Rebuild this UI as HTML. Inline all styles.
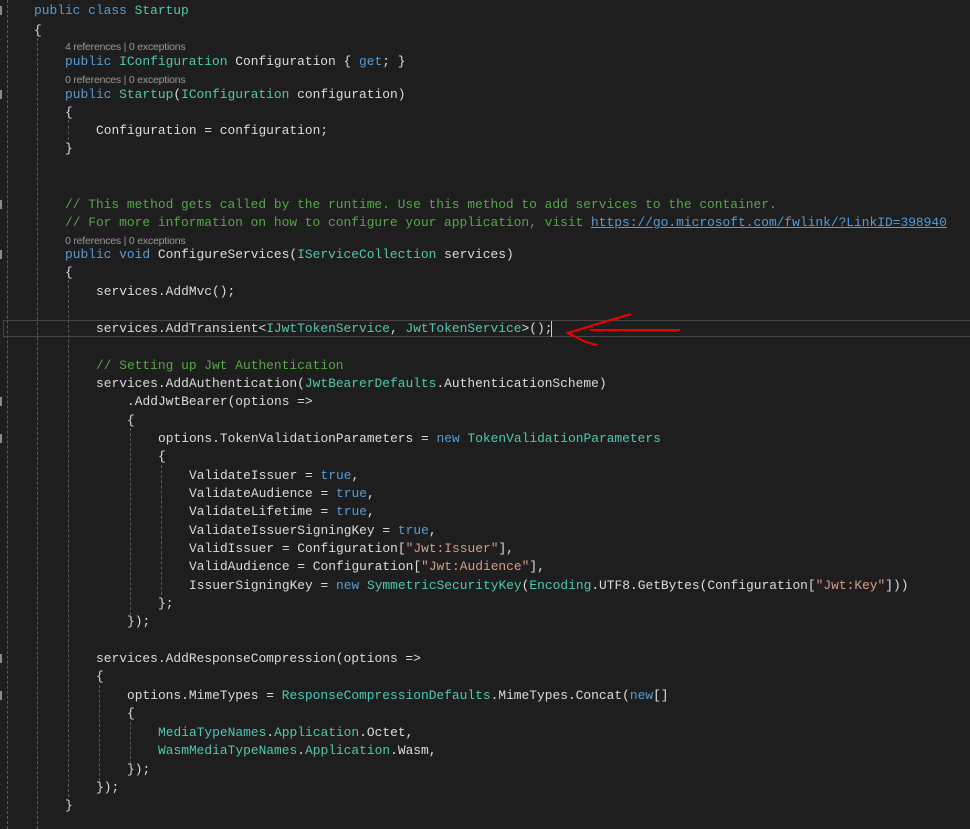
<!DOCTYPE html>
<html><head><meta charset="utf-8"><style>
html,body{margin:0;padding:0;background:#1e1e1e;width:970px;height:829px;overflow:hidden;position:relative}
#w{position:absolute;left:0;top:1px;width:970px;height:829px}
.l{position:absolute;white-space:pre;font-family:"Liberation Mono",monospace;font-size:12.9px;line-height:18px;height:18px;color:#dcdcdc}
.r{position:absolute;white-space:pre;font-family:"Liberation Sans",sans-serif;font-size:10.5px;line-height:12px;color:#999;letter-spacing:-0.2px}
.k{color:#569cd6}.t{color:#4ec9b0}.c{color:#57a64a}.s{color:#d69d85}
.u{color:#569cd6;text-decoration:underline}
.g{position:absolute;width:0;border-left:1px dashed #5a5a5a}
.m{position:absolute;left:0;width:2px;height:9px;background:#8a8a8a}
</style></head><body>
<div class="g" style="left:7px;top:0;height:829px"></div>
<div class="g" style="left:37px;top:38px;height:791px"></div>
<div class="g" style="left:68px;top:120px;height:20px"></div>
<div class="g" style="left:68px;top:280px;height:517px"></div>
<div class="g" style="left:130px;top:428px;height:187px"></div>
<div class="g" style="left:161px;top:465px;height:130px"></div>
<div class="g" style="left:99px;top:685px;height:96px"></div>
<div class="g" style="left:130px;top:722px;height:42px"></div>
<div class="m" style="top:6px"></div><div class="m" style="top:90px"></div><div class="m" style="top:200px"></div><div class="m" style="top:250px"></div><div class="m" style="top:397px"></div><div class="m" style="top:434px"></div><div class="m" style="top:654px"></div><div class="m" style="top:691px"></div>
<div style="position:absolute;left:3px;top:320px;width:970px;height:15px;border:1px solid #464646;border-right:none"></div>
<div style="position:absolute;left:551px;top:321px;width:1px;height:16px;background:#ccc"></div>
<svg style="position:absolute;left:560px;top:310px" width="130" height="40"><path d="M71 4 C50 10 30 16 8 23 C18 28 25 33 37 35" stroke="#e00" stroke-width="2" fill="none"/><path d="M30 20 L120 20" stroke="#e00" stroke-width="2"/></svg>
<div id="w">
<div class="l" style="left:34px;top:1px"><span class="k">public</span> <span class="k">class</span> <span class="t">Startup</span></div>
<div class="l" style="left:34px;top:21px">{</div>
<div class="r" style="left:65px;top:40px">4 references | 0 exceptions</div>
<div class="l" style="left:65px;top:52px"><span class="k">public</span> <span class="t">IConfiguration</span> Configuration { <span class="k">get</span>; }</div>
<div class="r" style="left:65px;top:73px">0 references | 0 exceptions</div>
<div class="l" style="left:65px;top:85px"><span class="k">public</span> <span class="t">Startup</span>(<span class="t">IConfiguration</span> configuration)</div>
<div class="l" style="left:65px;top:103px">{</div>
<div class="l" style="left:96px;top:121px">Configuration = configuration;</div>
<div class="l" style="left:65px;top:139px">}</div>
<div class="l c" style="left:65px;top:195px">// This method gets called by the runtime. Use this method to add services to the container.</div>
<div class="l c" style="left:65px;top:213px">// For more information on how to configure your application, visit <span class="u">https://go.microsoft.com/fwlink/?LinkID=398940</span></div>
<div class="r" style="left:65px;top:234px">0 references | 0 exceptions</div>
<div class="l" style="left:65px;top:245px"><span class="k">public</span> <span class="k">void</span> ConfigureServices(<span class="t">IServiceCollection</span> services)</div>
<div class="l" style="left:65px;top:263px">{</div>
<div class="l" style="left:96px;top:282px">services.AddMvc();</div>
<div class="l" style="left:96px;top:319px">services.AddTransient&lt;<span class="t">IJwtTokenService</span>, <span class="t">JwtTokenService</span>&gt;();</div>
<div class="l c" style="left:96px;top:356px">// Setting up Jwt Authentication</div>
<div class="l" style="left:96px;top:374px">services.AddAuthentication(<span class="t">JwtBearerDefaults</span>.AuthenticationScheme)</div>
<div class="l" style="left:127px;top:392px">.AddJwtBearer(options =&gt;</div>
<div class="l" style="left:127px;top:411px">{</div>
<div class="l" style="left:158px;top:429px">options.TokenValidationParameters = <span class="k">new</span> <span class="t">TokenValidationParameters</span></div>
<div class="l" style="left:158px;top:447px">{</div>
<div class="l" style="left:189px;top:466px">ValidateIssuer = <span class="k">true</span>,</div>
<div class="l" style="left:189px;top:484px">ValidateAudience = <span class="k">true</span>,</div>
<div class="l" style="left:189px;top:502px">ValidateLifetime = <span class="k">true</span>,</div>
<div class="l" style="left:189px;top:521px">ValidateIssuerSigningKey = <span class="k">true</span>,</div>
<div class="l" style="left:189px;top:539px">ValidIssuer = Configuration[<span class="s">"Jwt:Issuer"</span>],</div>
<div class="l" style="left:189px;top:557px">ValidAudience = Configuration[<span class="s">"Jwt:Audience"</span>],</div>
<div class="l" style="left:189px;top:576px">IssuerSigningKey = <span class="k">new</span> <span class="t">SymmetricSecurityKey</span>(<span class="t">Encoding</span>.UTF8.GetBytes(Configuration[<span class="s">"Jwt:Key"</span>]))</div>
<div class="l" style="left:158px;top:594px">};</div>
<div class="l" style="left:127px;top:612px">});</div>
<div class="l" style="left:96px;top:649px">services.AddResponseCompression(options =&gt;</div>
<div class="l" style="left:96px;top:667px">{</div>
<div class="l" style="left:127px;top:686px">options.MimeTypes = <span class="t">ResponseCompressionDefaults</span>.MimeTypes.Concat(<span class="k">new</span>[]</div>
<div class="l" style="left:127px;top:704px">{</div>
<div class="l" style="left:158px;top:723px"><span class="t">MediaTypeNames</span>.<span class="t">Application</span>.Octet,</div>
<div class="l" style="left:158px;top:741px"><span class="t">WasmMediaTypeNames</span>.<span class="t">Application</span>.Wasm,</div>
<div class="l" style="left:127px;top:760px">});</div>
<div class="l" style="left:96px;top:778px">});</div>
<div class="l" style="left:65px;top:796px">}</div>
</div>
</body></html>
